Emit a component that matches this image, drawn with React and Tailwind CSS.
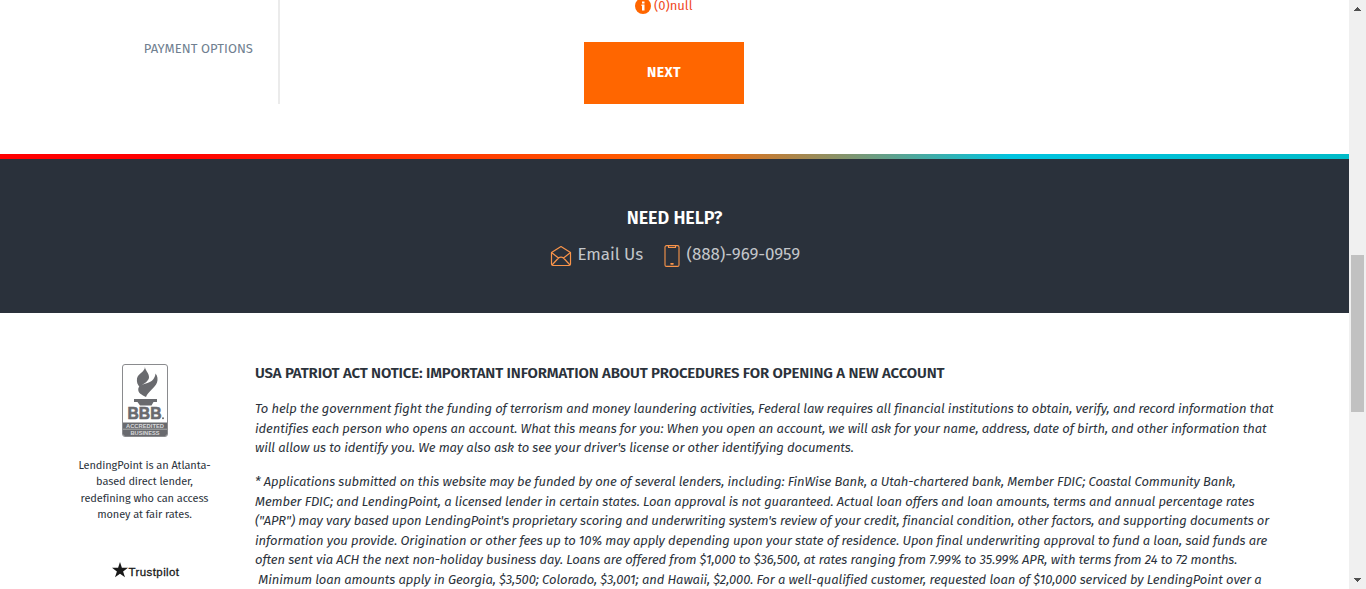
import React from "react";

const notice = [
  "To help the government fight the funding of terrorism and money laundering activities, Federal law requires all financial institutions to obtain, verify, and record information that",
  "identifies each person who opens an account. What this means for you: When you open an account, we will ask for your name, address, date of birth, and other information that",
  "will allow us to identify you. We may also ask to see your driver's license or other identifying documents.",
];

const terms = [
  "* Applications submitted on this website may be funded by one of several lenders, including: FinWise Bank, a Utah-chartered bank, Member FDIC; Coastal Community Bank,",
  "Member FDIC; and LendingPoint, a licensed lender in certain states. Loan approval is not guaranteed. Actual loan offers and loan amounts, terms and annual percentage rates",
  "(\"APR\") may vary based upon LendingPoint's proprietary scoring and underwriting system's review of your credit, financial condition, other factors, and supporting documents or",
  "information you provide. Origination or other fees up to 10% may apply depending upon your state of residence. Upon final underwriting approval to fund a loan, said funds are",
  "often sent via ACH the next non-holiday business day. Loans are offered from $1,000 to $36,500, at rates ranging from 7.99% to 35.99% APR, with terms from 24 to 72 months.",
  "\u00a0Minimum loan amounts apply in Georgia, $3,500; Colorado, $3,001; and Hawaii, $2,000. For a well-qualified customer, requested loan of $10,000 serviced by LendingPoint over a",
];

function Paragraph({ lines, className }) {
  return (
    <p className={"text-[13px] leading-[19.5px] tracking-[-0.093px] italic " + className}>
      {lines.map((text) => (
        <span key={text} className="block whitespace-nowrap">
          {text}
        </span>
      ))}
    </p>
  );
}

function InfoIcon() {
  return (
    <svg className="h-4 w-4" viewBox="0 0 16 16">
      <circle cx="8" cy="8" r="8" fill="#ff6600" />
      <path d="M7 3.500h2.500v2H7zM6.500 6.500h3v6H7V8h-.5z" fill="#fff" />
    </svg>
  );
}

function MailIcon() {
  return (
    <svg className="h-[22px] w-[22px]" viewBox="0 0 22 22" fill="none" stroke="#f9944a" strokeWidth="1.2" strokeLinejoin="round">
      <path d="M1.5 7.5 11 1.5l9.500 6v11.500a1.500 1.500 0 0 1-1.500 1.500H3a1.500 1.500 0 0 1-1.500-1.500z" />
      <path d="m1.500 7.500 7 5.500q2.500-1.800 5 0l7-5.500M2 20l6.500-7M20 20l-6.500-7" />
    </svg>
  );
}

function PhoneIcon() {
  return (
    <svg className="h-[22px] w-4" viewBox="0 0 16 22" fill="none" stroke="#f9944a" strokeWidth="1.1">
      <rect x="1" y=".6" width="14" height="20.800" rx="1.500" />
      <path d="M4.500 1v1.500h7V1M6.500 18.500h3" />
      <path d="M6.500 19.200h3" />
    </svg>
  );
}

function BbbSeal() {
  return (
    <svg className="h-[73px] w-[46px]" viewBox="0 0 46 73">
      <rect x=".5" y=".5" width="45" height="72" rx="2.500" fill="#fff" stroke="#8a8b8e" />
      <g fill="#696a6e">
        <path d="M23 2.500C22.500 6 27.500 9 27 13.500c-.4 3.500-3.500 5-9.500 9.500C15.500 20.500 14.500 18 15 14.500c.8-5 8-6.500 8-12z" />
        <path d="M33.500 9.500c2.200 2.500 2.500 6 1.500 9C33 24 26 27.500 24 33c-4-2-8.500-4-7.700-8.500.9-5 12-4.500 15.200-9.500 1.300-2 1.800-3.500 2-5.500z" />
        <path d="M12 35h23v3h-3.500l-2 3.500H18L15.500 38H12z" />
        <path d="M1 58.500h44V70q0 2-2 2H3q-2 0-2-2z" />
      </g>
      <text x="5.500" y="55.200" textLength="34" lengthAdjust="spacingAndGlyphs" fontFamily="Liberation Sans, sans-serif" fontWeight="700" fontSize="17" fill="#696a6e" stroke="#696a6e" strokeWidth=".7">BBB</text>
      <circle cx="41" cy="54.300" r="1" fill="#696a6e" />
      <path d="M1 65.200h44" stroke="#b9babc" strokeWidth=".8" />
      <g fontFamily="Liberation Sans, sans-serif" fontWeight="700" fontSize="6" fill="#d8d8da">
        <text x="4" y="64" textLength="38" lengthAdjust="spacingAndGlyphs">ACCREDITED</text>
        <text x="8.500" y="70.600" textLength="29" lengthAdjust="spacingAndGlyphs">BUSINESS</text>
      </g>
    </svg>
  );
}

export default function App() {
  return (
    <div className="flex h-[589px] w-[1366px] overflow-hidden bg-white font-['Fira_Sans','Noto_Sans',sans-serif] text-[#2b323b]">
      <main className="h-full w-[1349px] overflow-hidden">
        <section className="flex h-[154px]">
          <div className="h-[104px] w-[280px] whitespace-nowrap border-r-2 border-[#ebebeb] pr-[25px] pt-[39px] text-right text-[13px] leading-5 tracking-[0.05px] text-[#708090]">
            PAYMENT OPTIONS
          </div>
          <div className="ml-[304px] flex w-[160px] flex-col">
            <div className="-mt-[2px] ml-[51px] flex h-4 items-center gap-[3px] text-[13px] leading-4 text-[#f04a24]">
              <InfoIcon />
              <span className="leading-3">(0)null</span>
            </div>
            <button className="mt-[28px] h-[62px] w-[160px] bg-[#ff6600] pb-[2px] text-[14px] font-bold tracking-[0.4px] text-white">NEXT</button>
          </div>
        </section>
        <div className="h-[5px] bg-[linear-gradient(90deg,#ff0000_0%,#ff0000_13%,#ff6600_51%,#00c4e0_75%,#00bbc8_100%)]" />
        <section className="flex h-[154px] flex-col items-center bg-[#2a313b]">
          <h2 className="mt-[47px] text-[18px] font-semibold leading-6 tracking-[-0.1px] text-white">NEED HELP?</h2>
          <div className="mt-[13px] flex h-6 w-[250px] items-start text-[17px] leading-6 tracking-[-0.08px] text-[#c3c6ca]">
            <span className="mt-[2px] shrink-0"><MailIcon /></span>
            <span className="ml-[6px] w-[66px] shrink-0 whitespace-nowrap">Email Us</span>
            <span className="ml-[20px] mt-[2px] shrink-0"><PhoneIcon /></span>
            <span className="ml-[7px] whitespace-nowrap">(888)-969-0959</span>
          </div>
        </section>
        <section className="flex h-[276px] overflow-hidden">
          <aside className="ml-[72px] flex w-[145px] flex-col items-center pt-[51px]">
            <BbbSeal />
            <p className="mt-[20.500px] whitespace-nowrap text-center text-[11px] leading-[16.500px] tracking-[-0.1px]">
              LendingPoint is an Atlanta-<br />based direct lender,<br />redefining who can access<br />money at fair rates.
            </p>
            <div className="ml-[2px] mt-[37.500px] flex h-[18px] items-center gap-px text-[#191919]">
              <svg className="h-4 w-4" viewBox="0 0 16 16"><path fill="currentColor" d="m8 0 1.900 5.800H16l-4.900 3.600 1.900 5.900-5-3.600-5 3.600 1.900-5.900L0 5.800h6.100z" /></svg>
              <span className="mt-[5px] font-['Liberation_Sans',sans-serif] text-[11.500px] tracking-[0.4px] [-webkit-text-stroke:0.3px_#191919]">Trustpilot</span>
            </div>
          </aside>
          <article className="ml-[38px] pt-[50px]">
            <h3 className="whitespace-nowrap text-[15px] font-semibold leading-5 tracking-[-0.15px]">
              USA PATRIOT ACT NOTICE: IMPORTANT INFORMATION ABOUT PROCEDURES FOR OPENING A NEW ACCOUNT
            </h3>
            <Paragraph lines={notice} className="mt-[16px]" />
            <Paragraph lines={terms} className="mt-[14.500px]" />
          </article>
        </section>
      </main>
      <div className="flex h-full w-[17px] flex-col items-center bg-[#f0f0f0]">
        <svg className="mt-[7px] h-[4px] w-[7px]" viewBox="0 0 7 4" fill="#505050" shapeRendering="crispEdges"><path d="M3 0h1v1h1v1h1v1h1v1H0V3h1V2h1V1h1z" /></svg>
        <div className="mt-[244px] h-[157px] w-[13px] bg-[#c1c1c1]" />
        <svg className="mt-[166px] h-[4px] w-[7px]" viewBox="0 0 7 4" fill="#505050" shapeRendering="crispEdges"><path d="M0 0h7v1H6v1H5v1H4v1H3V3H2V2H1V1H0z" /></svg>
      </div>
    </div>
  );
}
